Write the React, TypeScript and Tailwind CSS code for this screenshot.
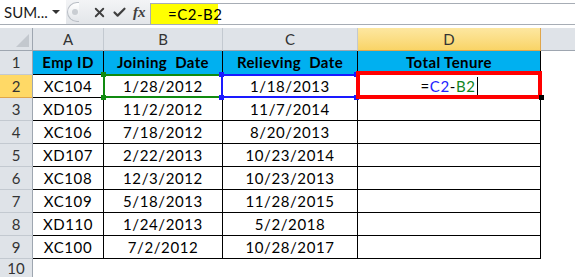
import { Check, X } from "lucide-react";

const rows = [
  ["XC104", "1/28/2012", "1/18/2013"],
  ["XD105", "11/2/2012", "11/7/2014"],
  ["XC106", "7/18/2012", "8/20/2013"],
  ["XD107", "2/22/2013", "10/23/2014"],
  ["XC108", "12/3/2012", "10/23/2013"],
  ["XC109", "5/18/2013", "11/28/2015"],
  ["XD110", "1/24/2013", "5/2/2018"],
  ["XC100", "7/2/2012", "10/28/2017"],
];

const font = { fontFamily: "Lato, 'Open Sans', sans-serif" };

function FormulaBar() {
  return (
    <div className="h-[28px] bg-white flex flex-col">
      <div className="h-[25px] flex border-b border-[#a7adb5]">
        <div className="w-[66px] shrink-0 flex items-center pl-[4px] text-[15px] text-[#1a1a1a]">
          <span className="flex-1 whitespace-nowrap">SUM...</span>
          <span className="mr-[6px] w-0 h-0 border-l-[4px] border-r-[4px] border-t-[4px] border-l-transparent border-r-transparent border-t-[#333]" />
        </div>
        <div className="w-[84px] shrink-0 flex items-center bg-gradient-to-b from-[#f3f4f6] to-[#e3e6ea]">
          <div className="ml-[1px] w-[12px] h-[20px] shrink-0 rounded-l-full border border-r-0 border-[#b9bec5] bg-gradient-to-b from-white to-[#e2e5e9] flex items-center justify-end pr-[1px]">
            <span className="w-[6px] h-[6px] rounded-full bg-[#c9cdd2]" />
          </div>
          <X size={15} strokeWidth={3} className="shrink-0 ml-[13px] text-[#3f3f3f]" />
          <Check size={15} strokeWidth={3.5} className="shrink-0 ml-[5px] text-[#3f3f3f]" />
          <span
            className="ml-[6px] text-[15px] italic font-bold text-[#3f3f3f] leading-none"
            style={{ fontFamily: "'Liberation Serif', serif" }}
          >
            fx
          </span>
        </div>
        <div className="flex-1 flex mt-[3px] border-t border-l border-[#a7adb5]">
          <div className="w-[67px] shrink-0 bg-[#ffff00] flex items-center pl-[17px] text-[15px] text-black whitespace-nowrap tracking-[0.5px]">
            =C2-B2
          </div>
        </div>
      </div>
    </div>
  );
}

export default function App() {
  const hdr = "flex items-center justify-center border-r border-b text-[15px] text-[#333]";
  return (
    <div className="w-[575px] h-[277px] bg-white overflow-hidden" style={font}>
      <FormulaBar />
      <div className="relative">
        <div className="grid grid-cols-[33px_71px_119px_135px_183px_1fr] grid-rows-[23px_24px_repeat(8,23px)_18px]">
          {/* column headers */}
          <div className="bg-[#dfe3e8] border-r border-b border-[#9ea6b0] relative">
            <span className="absolute right-[3px] bottom-[3px] w-0 h-0 border-b-[13px] border-l-[13px] border-l-transparent border-b-[#c3c8ce]" />
          </div>
          {["A", "B", "C"].map((c) => (
            <div key={c} className={`${hdr} bg-[#dfe3e8] border-r-[#c3c9d0] border-b-[#9ea6b0]`}>
              {c}
            </div>
          ))}
          <div className={`${hdr} bg-gradient-to-b from-[#fde7a0] to-[#f9d466] border-[#e0a64a]`}>D</div>
          <div className="bg-[#dfe3e8] border-b border-[#9ea6b0]" />

          {/* row 1 */}
          <div className={`${hdr} bg-[#dfe3e8] border-r-[#9ea6b0] border-b-[#c3c9d0]`}>1</div>
          {["Emp ID", "Joining\u00a0 Date", "Relieving\u00a0 Date", "Total Tenure"].map((t) => (
            <div
              key={t}
              className="bg-[#00b0f0] border-r border-b border-black flex items-center justify-center text-[15px] font-bold text-black tracking-[0.4px]"
            >
              {t}
            </div>
          ))}
          <div />

          {rows.map((r, i) => (
            <div key={r[0]} className="contents">
              <div
                className={`${hdr} border-r-[#9ea6b0] ${
                  i === 0 ? "bg-[#ffd966] border-b-[#e0a64a]" : "bg-[#dfe3e8] border-b-[#c3c9d0]"
                }`}
              >
                {i + 2}
              </div>
              {r.map((v) => (
                <div
                  key={v}
                  className="border-r border-b border-black flex items-center justify-center text-[15px] text-black tracking-[0.6px]"
                >
                  {v}
                </div>
              ))}
              <div className="border-r border-b border-black flex items-center justify-center text-[15px] tracking-[0.6px]">
                {i === 0 && (
                  <span className="flex items-center">
                    <span className="text-black">=</span>
                    <span className="text-[#2424ff]">C2</span>
                    <span className="text-black">-</span>
                    <span className="text-[#12861f]">B2</span>
                    <span className="ml-[1px] w-px h-[18px] bg-black" />
                  </span>
                )}
              </div>
              <div />
            </div>
          ))}

          <div className="flex justify-center bg-[#dfe3e8] border-r border-[#9ea6b0] text-[15px] leading-[17px] pt-[1px] text-[#333]">
            10
          </div>
        </div>

        {/* reference highlights */}
        <div className="absolute left-[103px] top-[46px] w-[120px] h-[24px] border-2 border-[#108a10]" />
        <div className="absolute left-[221px] top-[46px] w-[137px] h-[24px] border-2 border-[#1a1aff]" />
        {[
          [101, 44, "#108a10"],
          [101, 67, "#108a10"],
          [219, 44, "#1a1aff"],
          [219, 67, "#1a1aff"],
          [354, 44, "#1a1aff"],
          [354, 67, "#1a1aff"],
        ].map(([x, y, c]) => (
          <span
            key={`${x}-${y}`}
            className="absolute w-[5px] h-[5px]"
            style={{ left: x as number, top: y as number, background: c as string }}
          />
        ))}
        <div className="absolute left-[356px] top-[43px] w-[186px] h-[28px] border-[4px] border-[#ff0000]" />
        <span className="absolute left-[539px] top-[67px] w-[5px] h-[5px] bg-black" />
      </div>
    </div>
  );
}
